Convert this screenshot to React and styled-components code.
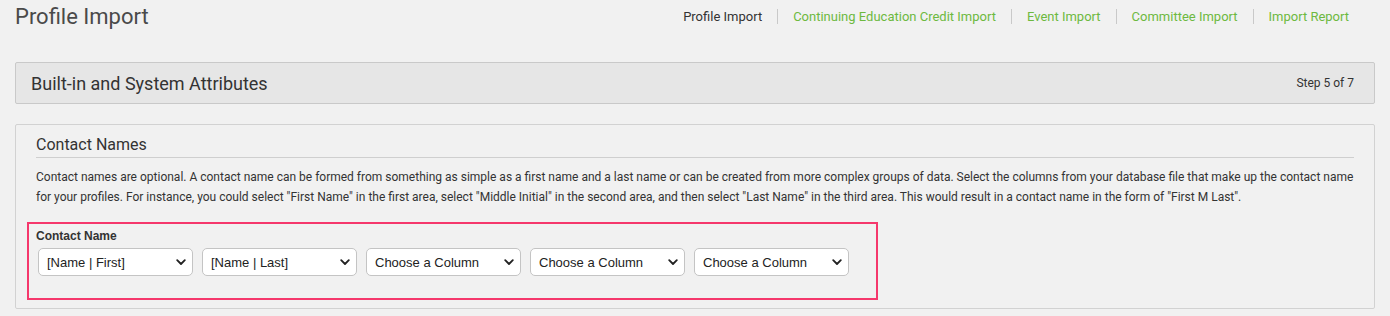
import React from "react";
import styled, { createGlobalStyle } from "styled-components";

const Global = createGlobalStyle`
  html, body {
    margin: 0;
    padding: 0;
    background: #f1f1f1;
    font-family: Roboto, "Liberation Sans", sans-serif;
    color: #333;
  }
`;

const Page = styled.div`
  padding: 0 15px;
`;

const TopBar = styled.div`
  display: flex;
  justify-content: space-between;
  align-items: flex-start;
  height: 62px;
`;

const Title = styled.h1`
  margin: 4px 0 0;
  font-size: 22px;
  font-weight: 400;
  line-height: 26px;
  color: #4a4a4a;
`;

const Nav = styled.nav`
  display: flex;
  align-items: center;
  margin: 9px 11px 0 0;
`;

const NavItem = styled.a`
  font-size: 13px;
  line-height: 15px;
  padding: 0 15px;
  color: ${(p) => (p.$active ? "#333" : "#6db93f")};
  text-decoration: none;
  border-left: 1px solid #c9c9c9;
  &:first-child {
    border-left: none;
  }
`;

const StepHeader = styled.div`
  display: flex;
  justify-content: space-between;
  align-items: center;
  height: 40px;
  padding: 0 20px 0 15px;
  background: #e6e6e6;
  border: 1px solid #c9c9c9;
  border-radius: 2px;
`;

const StepTitle = styled.h2`
  margin: 0;
  font-size: 18px;
  font-weight: 400;
  color: #333;
`;

const StepCount = styled.span`
  font-size: 12px;
  color: #333;
`;

const Panel = styled.section`
  margin-top: 20px;
  padding: 10px 20px 8px;
  border: 1px solid #d2d2d2;
  border-radius: 2px;
`;

const PanelTitle = styled.h3`
  margin: 0;
  padding-bottom: 2px;
  font-size: 16px;
  font-weight: 400;
  line-height: 20px;
  color: #333;
  border-bottom: 1px solid #cfcfcf;
`;

const Text = styled.p`
  margin: 9px 0 0;
  font-size: 12px;
  line-height: 20px;
  color: #333;
`;

const FieldGroup = styled.div`
  margin: 15px 0 0 -9px;
  width: 851px;
  height: 78px;
  box-sizing: border-box;
  padding: 4px 7px 0;
  border: 2px solid #f5386c;
`;

const Label = styled.div`
  font-family: "Liberation Sans", Arial, sans-serif;
  font-size: 12px;
  font-weight: 700;
  line-height: 16px;
  color: #333;
`;

const SelectRow = styled.div`
  display: flex;
  gap: 9px;
  margin: 4px 0 0 2px;
`;

const SelectWrap = styled.div`
  position: relative;
  width: 155px;
  height: 28px;
`;

const Select = styled.select`
  appearance: none;
  width: 100%;
  height: 100%;
  padding: 0 24px 0 8px;
  font-family: "Liberation Sans", Arial, sans-serif;
  font-size: 13px;
  color: #222;
  background: #fff;
  border: 1px solid #c4c4c4;
  border-radius: 5px;
  outline: none;
`;

const Chevron = styled.svg`
  position: absolute;
  right: 7px;
  top: 11px;
  pointer-events: none;
`;

const columns = ["[Name | First]", "[Name | Last]", "Choose a Column", "Choose a Column", "Choose a Column"];

const ColumnSelect = ({ value }) => (
  <SelectWrap>
    <Select defaultValue={value}>
      <option>{value}</option>
    </Select>
    <Chevron width="10" height="7" viewBox="0 0 10 7">
      <path d="M1.2 1.2 L5 5 L8.8 1.2" fill="none" stroke="#222" strokeWidth="1.8" strokeLinecap="round" strokeLinejoin="round" />
    </Chevron>
  </SelectWrap>
);

export default function App() {
  return (
    <Page>
      <Global />
      <TopBar>
        <Title>Profile Import</Title>
        <Nav>
          <NavItem $active>Profile Import</NavItem>
          <NavItem href="#">Continuing Education Credit Import</NavItem>
          <NavItem href="#">Event Import</NavItem>
          <NavItem href="#">Committee Import</NavItem>
          <NavItem href="#">Import Report</NavItem>
        </Nav>
      </TopBar>
      <StepHeader>
        <StepTitle>Built-in and System Attributes</StepTitle>
        <StepCount>Step 5 of 7</StepCount>
      </StepHeader>
      <Panel>
        <PanelTitle>Contact Names</PanelTitle>
        <Text>
          Contact names are optional. A contact name can be formed from something as simple as a first name and a last name or can be created from more complex groups of data. Select the columns from your database file that make up the contact name for your profiles. For instance, you could select "First Name" in the first area, select "Middle Initial" in the second area, and then select "Last Name" in the third area. This would result in a contact name in the form of "First M Last".
        </Text>
        <FieldGroup>
          <Label>Contact Name</Label>
          <SelectRow>
            {columns.map((c, i) => (
              <ColumnSelect key={i} value={c} />
            ))}
          </SelectRow>
        </FieldGroup>
      </Panel>
    </Page>
  );
}
